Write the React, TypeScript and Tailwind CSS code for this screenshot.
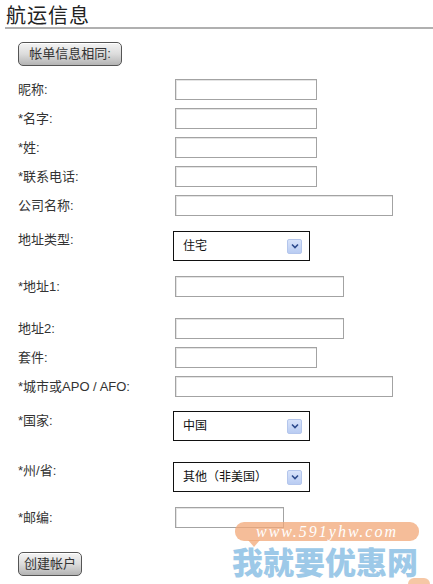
import React from "react";

const font = { fontFamily: '"Liberation Sans", "Noto Sans CJK SC", sans-serif' };

function Input({ w }: { w: string }) {
  return <div className={`${w} h-[21px] border border-[#a3a3a3] bg-white shadow-[inset_1px_1px_0_#e4e4e4]`} />;
}

function Select({ text }: { text: string }) {
  return (
    <div className="w-[137px] h-[30px] border border-[#111] bg-white flex items-center pl-[9px] pr-[7px] justify-between">
      <span className="text-[12px] text-[#111]">{text}</span>
      <span className="w-[15px] h-[15px] rounded-[2px] bg-gradient-to-b from-[#d8e3fa] to-[#b9ccf2] border border-[#b4c6ec] flex items-center justify-center">
        <svg width="8" height="6" viewBox="0 0 8 6">
          <path d="M1 1.5 L4 4.5 L7 1.5" stroke="#2d4a8c" strokeWidth="1.6" fill="none" />
        </svg>
      </span>
    </div>
  );
}

function Btn({ text, w }: { text: string; w: string }) {
  return (
    <div
      className={`${w} h-[24px] rounded-[5px] border border-[#555] bg-gradient-to-b from-[#f4f4f4] via-[#dcdcdc] to-[#b4b4b4] flex items-center justify-center text-[13px] text-[#333] shadow-[inset_0_1px_0_#fff]`}
    >
      {text}
    </div>
  );
}

function Row({ label, mt, top, children }: { label: string; mt: string; top?: boolean; children: React.ReactNode }) {
  return (
    <div className={`flex ${top ? "items-start" : "items-center"} ${mt}`}>
      <div className={`w-[157px] text-[13px] text-[#333] leading-[18px] ${top ? "pt-[0px]" : ""}`}>{label}</div>
      {children}
    </div>
  );
}

export default function App() {
  return (
    <div className="relative w-[433px] h-[584px] bg-white overflow-hidden" style={font}>
      <div className="pl-[6px] pt-[3px]">
        <div className="text-[20px] leading-[24px] text-[#222] tracking-[1px]" style={{ fontFamily: '"Noto Sans CJK SC", sans-serif' }}>
          航运信息
        </div>
      </div>
      <div className="ml-[5px] h-[2px] bg-[#b0b0b0] mt-[0px]" />
      <div className="pl-[18px]">
        <div className="mt-[13px]">
          <Btn text="帐单信息相同:" w="w-[104px]" />
        </div>
        <Row label="昵称:" mt="mt-[13px]"><Input w="w-[142px]" /></Row>
        <Row label="*名字:" mt="mt-[8px]"><Input w="w-[142px]" /></Row>
        <Row label="*姓:" mt="mt-[8px]"><Input w="w-[142px]" /></Row>
        <Row label="*联系电话:" mt="mt-[8px]"><Input w="w-[142px]" /></Row>
        <Row label="公司名称:" mt="mt-[8px]"><Input w="w-[218px]" /></Row>
        <Row label="地址类型:" mt="mt-[15px]" top>
          <div className="-ml-[2px]"><Select text="住宅" /></div>
        </Row>
        <Row label="*地址1:" mt="mt-[15px]"><Input w="w-[169px]" /></Row>
        <Row label="地址2:" mt="mt-[21px]"><Input w="w-[169px]" /></Row>
        <Row label="套件:" mt="mt-[8px]"><Input w="w-[142px]" /></Row>
        <Row label="*城市或APO / AFO:" mt="mt-[8px]"><Input w="w-[218px]" /></Row>
        <Row label="*国家:" mt="mt-[15px]" top>
          <div className="-ml-[2px] mt-[-1px]"><Select text="中国" /></div>
        </Row>
        <Row label="*州/省:" mt="mt-[21px]" top>
          <div className="-ml-[2px]"><Select text="其他（非美国）" /></div>
        </Row>
        <Row label="*邮编:" mt="mt-[15px]"><Input w="w-[109px]" /></Row>
        <div className="mt-[24px]">
          <Btn text="创建帐户" w="w-[64px]" />
        </div>
      </div>

      {/* watermark */}
      <div className="absolute left-[235px] top-[522px] w-[184px] h-[19px] rounded-[9px] bg-[#f2a877] opacity-75 flex items-center justify-center">
        <span
          className="italic text-white text-[16px] tracking-[2px] leading-none"
          style={{ fontFamily: '"Liberation Serif", serif' }}
        >
          www.591yhw.com
        </span>
      </div>
      <div className="absolute left-[248px] top-[540px] w-0 h-0 border-l-[6px] border-l-transparent border-r-[6px] border-r-transparent border-t-[7px] border-t-[#f2a877] opacity-75" />
      <div
        className="absolute left-[232px] top-[545px] text-[31px] font-black leading-none text-[#8cc0e4] opacity-85"
        style={{ fontFamily: '"Noto Sans CJK SC", sans-serif' }}
      >
        我就要优惠网
      </div>
      <div className="absolute left-[408px] top-[578px] w-[22px] h-[12px] rounded-[6px] bg-[#f4b98e] opacity-80" />
    </div>
  );
}
